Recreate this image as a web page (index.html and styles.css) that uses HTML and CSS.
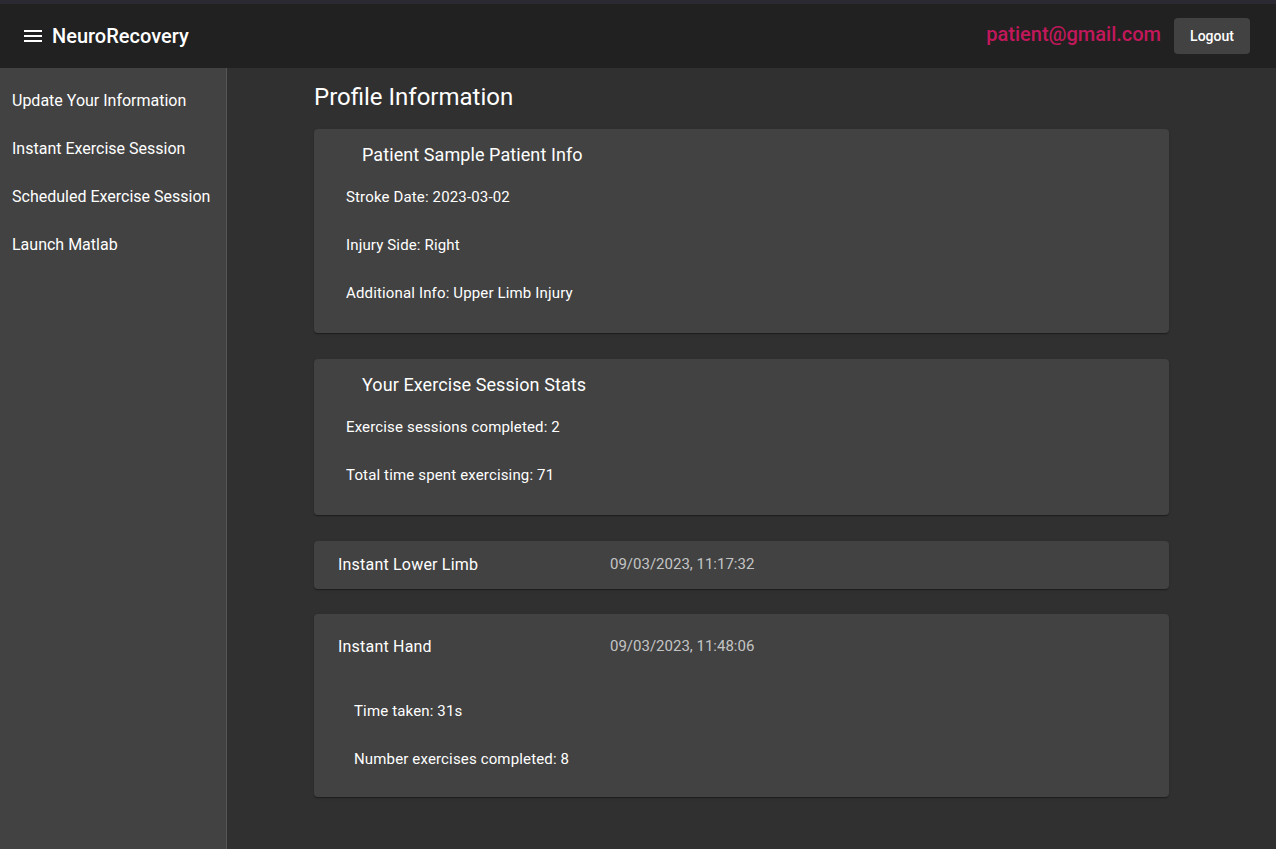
FILE: index.html
```html
<!DOCTYPE html>
<html lang="en">
<head>
<meta charset="utf-8">
<title>NeuroRecovery</title>
<link rel="stylesheet" href="styles.css">
</head>
<body>
<div class="topstrip"></div>
<header class="toolbar">
  <div class="brand">
    <svg class="menu-icon" width="24" height="24" viewBox="0 0 24 24"><path d="M3 18h18v-2H3v2zm0-5h18v-2H3v2zm0-7v2h18V6H3z" fill="#fff"/></svg>
    <span class="brand-name">NeuroRecovery</span>
  </div>
  <div class="user">
    <span class="email">patient@gmail.com</span>
    <button class="logout">Logout</button>
  </div>
</header>
<div class="layout">
  <nav class="sidenav">
    <a class="nav-item">Update Your Information</a>
    <a class="nav-item">Instant Exercise Session</a>
    <a class="nav-item">Scheduled Exercise Session</a>
    <a class="nav-item">Launch Matlab</a>
  </nav>
  <main class="content">
    <h2 class="page-title">Profile Information</h2>
    <section class="card">
      <div class="card-title">Patient Sample Patient Info</div>
      <p class="line">Stroke Date: 2023-03-02</p>
      <p class="line">Injury Side: Right</p>
      <p class="line">Additional Info: Upper Limb Injury</p>
    </section>
    <section class="card">
      <div class="card-title">Your Exercise Session Stats</div>
      <p class="line">Exercise sessions completed: 2</p>
      <p class="line">Total time spent exercising: 71</p>
    </section>
    <section class="panel">
      <div class="panel-header">
        <span class="panel-title">Instant Lower Limb</span>
        <span class="panel-date">09/03/2023, 11:17:32</span>
      </div>
    </section>
    <section class="panel expanded">
      <div class="panel-header">
        <span class="panel-title">Instant Hand</span>
        <span class="panel-date">09/03/2023, 11:48:06</span>
      </div>
      <div class="panel-body">
        <p class="line">Time taken: 31s</p>
        <p class="line">Number exercises completed: 8</p>
      </div>
    </section>
  </main>
</div>
</body>
</html>
```
FILE: styles.css
```css
* { box-sizing: border-box; }
html, body { margin: 0; padding: 0; height: 100%; }
body {
  font-family: Roboto, "Liberation Sans", sans-serif;
  background: #303030;
  color: #fff;
  display: flex;
  flex-direction: column;
  overflow: hidden;
}
.topstrip { height: 4px; background: #2b2a33; flex: none; }
.toolbar {
  flex: none;
  height: 64px;
  background: #212121;
  display: flex;
  align-items: center;
  justify-content: space-between;
  padding: 0 26px 0 21px;
}
.brand { display: flex; align-items: center; }
.menu-icon { display: block; margin-right: 7px; }
.brand-name { font-size: 20px; font-weight: 500; }
.user { display: flex; align-items: center; gap: 13px; }
.email { color: #c2185b; font-size: 20px; font-weight: 500; margin-top: -4px; }
.logout {
  font-family: inherit;
  font-size: 14px;
  font-weight: 500;
  color: #fff;
  background: #424242;
  border: none;
  border-radius: 4px;
  height: 36px;
  width: 76px;
  padding: 0;
}
.layout { flex: 1; display: flex; min-height: 0; }
.sidenav {
  width: 227px;
  flex: none;
  background: #424242;
  border-right: 1px solid #565656;
  padding-top: 8px;
  display: flex;
  flex-direction: column;
}
.nav-item {
  height: 48px;
  display: flex;
  align-items: center;
  padding-left: 12px;
  font-size: 16px;
  color: #fff;
}
.content { flex: 1; padding-left: 87px; }
.page-title {
  margin: 13px 0 16px;
  font-size: 24px;
  font-weight: 400;
  line-height: 32px;
}
.card, .panel {
  width: 855px;
  background: #424242;
  border-radius: 4px;
  box-shadow: 0 2px 1px -1px rgba(0,0,0,.2), 0 1px 1px 0 rgba(0,0,0,.14), 0 1px 3px 0 rgba(0,0,0,.12);
  margin-bottom: 26px;
}
.card { padding: 0 0 16px 32px; }
.card-title {
  height: 44px;
  padding: 15px 0 0 16px;
  font-size: 18px;
  line-height: 22px;
  letter-spacing: 0.08px;
}
.line {
  margin: 0;
  height: 48px;
  display: flex;
  align-items: center;
  font-size: 15px;
  letter-spacing: 0.15px;
}
.panel { margin-bottom: 25px; }
.panel-header {
  height: 48px;
  display: flex;
  align-items: center;
  padding: 0 24px 2px;
}
.expanded .panel-header { height: 64px; padding-bottom: 0; }
.panel-title { width: 272px; font-size: 16px; letter-spacing: 0.2px; }
.panel-date { font-size: 15px; color: rgba(255,255,255,.7); }
.panel-body { padding: 9px 24px 14px 40px; }
```
